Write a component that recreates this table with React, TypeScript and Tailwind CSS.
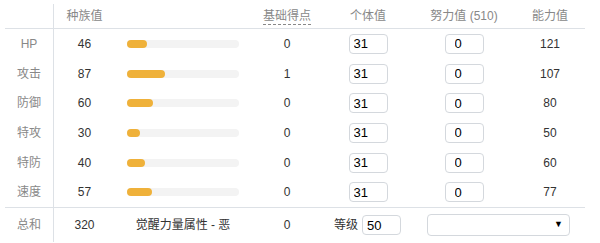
import { useState } from 'react'

const stats = [
  { label: 'HP', base: 46, pt: 0, value: 121 },
  { label: '攻击', base: 87, pt: 1, value: 107 },
  { label: '防御', base: 60, pt: 0, value: 80 },
  { label: '特攻', base: 30, pt: 0, value: 50 },
  { label: '特防', base: 40, pt: 0, value: 60 },
  { label: '速度', base: 57, pt: 0, value: 77 },
]

const cols = 'grid grid-cols-[49px_61px_136px_72px_90px_102px_70px]'

function Box({ value, wide }: { value: string; wide?: boolean }) {
  return (
    <input
      defaultValue={value}
      className={`w-[39px] h-[20px] rounded-[4px] border border-[#d4d8dd] bg-white ${wide ? 'pl-[9px]' : 'pl-[4px]'} text-[13px] text-black font-['Liberation_Sans',sans-serif] outline-none`}
    />
  )
}

export default function App() {
  const [nature] = useState('')

  return (
    <div className="w-[600px] h-[243px] bg-white pl-[5px] pt-[4px] font-['Liberation_Sans','Noto_Sans_CJK_SC',sans-serif] text-[12px] text-[#333]">
      <div className="w-[580px]">
        {/* 表头 */}
        <div className={`${cols} h-[25px] border-b border-[#dde1e6] items-center text-[#888] text-center`}>
          <div className="h-full border-r border-[#dde1e6]" />
          <div>种族值</div>
          <div />
          <div>
            <span className="border-b border-dashed border-[#888] pb-[1px]">基础得点</span>
          </div>
          <div>个体值</div>
          <div>努力值 (510)</div>
          <div>能力值</div>
        </div>

        {/* 各项能力 */}
        {stats.map(s => (
          <div key={s.label} className={`${cols} h-[29.7px] items-center text-center`}>
            <div className="h-full flex items-center justify-center border-r border-[#dde1e6] text-[#888]">{s.label}</div>
            <div>{s.base}</div>
            <div className="pl-[12px]">
              <div className="w-[112px] h-[8px] rounded-full bg-[#f3f3f3]">
                <div className="h-full rounded-full bg-[#efb13a]" style={{ width: (s.base / 255) * 112 }} />
              </div>
            </div>
            <div>{s.pt}</div>
            <div className="flex justify-center">
              <Box value="31" />
            </div>
            <div className="flex justify-center">
              <Box value="0" wide />
            </div>
            <div>{s.value}</div>
          </div>
        ))}

        {/* 总和 */}
        <div className={`${cols} h-[35px] border-t border-[#dde1e6] items-center text-center`}>
          <div className="h-full flex items-center justify-center border-r border-[#dde1e6] text-[#888]">总和</div>
          <div>320</div>
          <div>觉醒力量属性 - 恶</div>
          <div>0</div>
          <div className="flex items-center justify-end gap-[4px] pr-[12px]">
            <span className="text-[#333]">等级</span>
            <Box value="50" />
          </div>
          <div className="col-span-2 pl-[14px] pr-[15px]">
            <div className="h-[22px] rounded-[4px] border border-[#d4d8dd] bg-white flex items-center justify-end pr-[6px] text-[9px] text-black">
              {nature}▼
            </div>
          </div>
        </div>
      </div>
    </div>
  )
}
